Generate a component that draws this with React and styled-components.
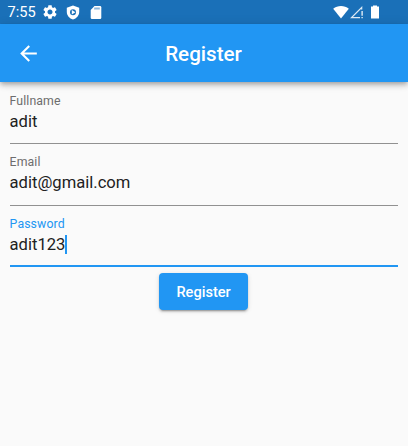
import React from "react";
import styled, { createGlobalStyle } from "styled-components";

const Global = createGlobalStyle`
  * { box-sizing: border-box; }
  body { margin: 0; background: #fafafa; font-family: Roboto, sans-serif; }
`;

const Screen = styled.div`
  height: 446px;
  background: #fafafa;
  overflow: hidden;
`;

const StatusBar = styled.div`
  display: flex;
  align-items: center;
  justify-content: space-between;
  height: 24px;
  padding: 0 29px 0 7.5px;
  background: #1a70b8;
  color: #fff;
`;

const StatusGroup = styled.div`
  display: flex;
  align-items: center;
  gap: ${(p) => p.$gap}px;
`;

const Clock = styled.span`
  width: 28px;
  font-size: 14.6px;
  line-height: 24px;
  white-space: nowrap;
`;

const Icon = styled.svg`
  display: block;
  flex: none;
  width: ${(p) => p.$w}px;
  height: ${(p) => p.$h}px;
  margin-left: ${(p) => p.$shift || 0}px;
  fill: #fff;
`;

const AppBar = styled.header`
  display: grid;
  grid-template-columns: 58px 1fr 59px;
  align-items: center;
  height: 58px;
  background: #2196f3;
  box-shadow: 0 2px 4px -1px rgba(0, 0, 0, 0.2), 0 4px 5px rgba(0, 0, 0, 0.14),
    0 1px 10px rgba(0, 0, 0, 0.12);
`;

const BackButton = styled.button`
  display: flex;
  padding: 0 0 0 15.5px;
  border: 0;
  background: none;
`;

const Title = styled.h1`
  margin: 0;
  padding-top: 2px;
  text-align: center;
  color: #fff;
  font-size: 20.6px;
  font-weight: 500;
  line-height: 24px;
`;

const Form = styled.form`
  display: flex;
  flex-direction: column;
  align-items: center;
  padding: 0 10.4px 0 9.6px;
`;

const Field = styled.div`
  display: flex;
  flex-direction: column;
  justify-content: flex-end;
  width: 100%;
  height: ${(p) => p.$height}px;
  border-bottom: ${(p) => (p.$focused ? "2px solid #2196f3" : "1px solid #919191")};
`;

const Label = styled.div`
  color: ${(p) => (p.$focused ? "#2196f3" : "#6d6d6d")};
  font-size: 12.3px;
  line-height: 14px;
  letter-spacing: 0.1px;
`;

const Value = styled.div`
  display: flex;
  align-items: center;
  height: 26px;
  margin-bottom: ${(p) => p.$gap}px;
  padding-top: 2px;
  color: #212121;
  font-size: 16.6px;
  line-height: 26px;
`;

const Caret = styled.span`
  width: 2px;
  height: 19px;
  margin-bottom: 2px;
  background: #2196f3;
`;

const Submit = styled.button`
  width: 89px;
  height: 37px;
  margin-top: 6px;
  padding: 1px 0 0;
  border: 0;
  border-radius: 4px;
  background: #2196f3;
  color: #fff;
  font: 500 14.6px/20px Roboto, sans-serif;
  box-shadow: 0 3px 1px -2px rgba(0, 0, 0, 0.2), 0 2px 2px rgba(0, 0, 0, 0.14),
    0 1px 5px rgba(0, 0, 0, 0.12);
`;

const fields = [
  { label: "Fullname", value: "adit", height: 62, gap: 9 },
  { label: "Email", value: "adit@gmail.com", height: 62, gap: 10 },
  { label: "Password", value: "adit123", height: 61, gap: 8, focused: true },
];

export default function App() {
  return (
    <Screen>
      <Global />
      <StatusBar>
        <StatusGroup $gap={7}>
          <Clock>7:55</Clock>
          <Icon $w={14} $h={14} viewBox="2 2 20 20">
            <path d="M19.14 12.94c.04-.3.06-.61.06-.94 0-.32-.02-.64-.07-.94l2.03-1.58c.18-.14.23-.41.12-.61l-1.92-3.32c-.12-.22-.37-.29-.59-.22l-2.39.96c-.5-.38-1.03-.7-1.62-.94l-.36-2.54c-.04-.24-.24-.41-.48-.41h-3.84c-.24 0-.43.17-.47.41l-.36 2.54c-.59.24-1.13.57-1.62.94l-2.39-.96c-.22-.08-.47 0-.59.22L2.74 8.87c-.12.21-.08.47.12.61l2.03 1.58c-.05.3-.09.63-.09.94s.02.64.07.94l-2.03 1.58c-.18.14-.23.41-.12.61l1.92 3.32c.12.22.37.29.59.22l2.39-.96c.5.38 1.03.7 1.62.94l.36 2.54c.05.24.24.41.48.41h3.84c.24 0 .44-.17.47-.41l.36-2.54c.59-.24 1.13-.56 1.62-.94l2.39.96c.22.08.47 0 .59-.22l1.92-3.32c.12-.22.07-.47-.12-.61l-2.01-1.58zM12 15.6c-1.98 0-3.6-1.62-3.6-3.6s1.62-3.6 3.6-3.6 3.6 1.62 3.6 3.6-1.62 3.6-3.6 3.6z" />
          </Icon>
          <Icon $w={16} $h={15} $shift={1} viewBox="0 0 16 15">
            <path fillRule="evenodd" d="M8 .4 14.200 2.800V7c0 3.400-2.600 6.500-6.200 7.600C4.400 13.500 1.800 10.400 1.800 7V2.800ZM8 4.300a3 3 0 1 0 0 6 3 3 0 0 0 0-6Z" />
            <path d="M6.800 5v4.600l3.600-2.300Z" />
          </Icon>
          <Icon $w={16} $h={15} viewBox="0 0 16 15">
            <path d="M6.500 1H12a1.300 1.300 0 0 1 1.300 1.300v10.400A1.300 1.300 0 0 1 12 14H4a1.300 1.300 0 0 1-1.300-1.300V5Z" />
            <path fill="#1a70b8" opacity=".5" d="M6.300 2.500h5.500v2H6z" />
          </Icon>
        </StatusGroup>
        <StatusGroup $gap={1}>
          <Icon $w={16} $h={14} viewBox="0 0 16 14">
            <path d="M.2 3.800C4.500.2 11.500.2 15.800 3.800L8 13.500Z" />
          </Icon>
          <Icon $w={14} $h={14} viewBox="0 0 14 14">
            <path fillRule="evenodd" opacity=".85" d="M0 13.300 12.300 1v3.400H11V4L3 12h7v1.300Z" />
            <path d="M11.500 6h1.200v4.800h-1.200zm0 6h1.200v1.300h-1.200z" />
          </Icon>
          <Icon $w={8} $h={14} $shift={6} viewBox="0 0 8 14">
            <path d="M2 .5h4v1h2v12H0v-12h2Z" />
          </Icon>
        </StatusGroup>
      </StatusBar>
      <AppBar>
        <BackButton type="button" aria-label="Back">
          <Icon $w={25} $h={25} viewBox="0 0 24 24">
            <path d="M20 11H7.830l5.590-5.590L12 4l-8 8 8 8 1.410-1.410L7.830 13H20v-2z" />
          </Icon>
        </BackButton>
        <Title>Register</Title>
      </AppBar>
      <Form>
        {fields.map((f) => (
          <Field key={f.label} $height={f.height} $focused={f.focused}>
            <Label $focused={f.focused}>{f.label}</Label>
            <Value $gap={f.gap}>
              {f.value}
              {f.focused && <Caret />}
            </Value>
          </Field>
        ))}
        <Submit type="button">Register</Submit>
      </Form>
    </Screen>
  );
}
